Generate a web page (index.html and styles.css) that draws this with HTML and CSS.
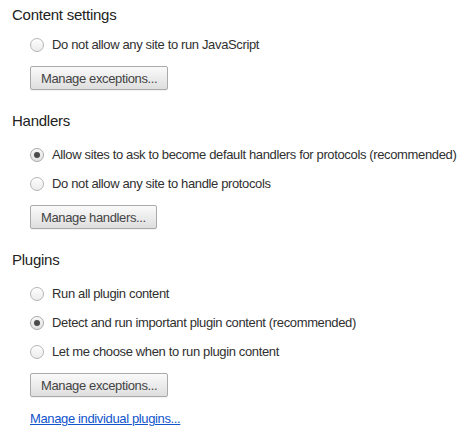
FILE: index.html
```html
<!DOCTYPE html>
<html>
<head>
<meta charset="utf-8">
<link rel="stylesheet" href="styles.css">
</head>
<body>
<div class="page">
  <section class="section section-first">
    <h3 class="heading">Content settings</h3>
    <div class="options">
      <label class="option"><span class="radio"></span><span class="label">Do not allow any site to run JavaScript</span></label>
    </div>
    <button class="btn">Manage exceptions...</button>
  </section>
  <section class="section">
    <h3 class="heading">Handlers</h3>
    <div class="options">
      <label class="option"><span class="radio checked"></span><span class="label">Allow sites to ask to become default handlers for protocols (recommended)</span></label>
      <label class="option"><span class="radio"></span><span class="label">Do not allow any site to handle protocols</span></label>
    </div>
    <button class="btn">Manage handlers...</button>
  </section>
  <section class="section">
    <h3 class="heading">Plugins</h3>
    <div class="options">
      <label class="option"><span class="radio"></span><span class="label">Run all plugin content</span></label>
      <label class="option"><span class="radio checked"></span><span class="label">Detect and run important plugin content (recommended)</span></label>
      <label class="option"><span class="radio"></span><span class="label">Let me choose when to run plugin content</span></label>
    </div>
    <button class="btn">Manage exceptions...</button>
    <a class="link" href="#">Manage individual plugins...</a>
  </section>
</div>
</body>
</html>
```
FILE: styles.css
```css
html, body {
  margin: 0;
  padding: 0;
  background: #fff;
}
body {
  font-family: "Liberation Sans", Arial, Helvetica, sans-serif;
  font-size: 13px;
  color: #303030;
  letter-spacing: -0.36px;
}
.page {
  display: flex;
  flex-direction: column;
  padding: 6px 0 0 12px;
}
.section {
  display: flex;
  flex-direction: column;
  align-items: flex-start;
  margin-top: 22px;
}
.section-first {
  margin-top: 0;
}
.heading {
  margin: 0;
  font-size: 15px;
  line-height: 18px;
  font-weight: normal;
  color: #222;
  letter-spacing: -0.25px;
}
.options {
  display: flex;
  flex-direction: column;
  margin: 10px 0 7px 18px;
}
.section-first .options {
  margin-top: 6px;
}
.option {
  display: flex;
  align-items: center;
  height: 29px;
  gap: 8px;
}
.radio {
  box-sizing: border-box;
  width: 14px;
  height: 14px;
  border-radius: 50%;
  border: 1px solid #b4b4b4;
  background: linear-gradient(#fdfdfd, #ececec);
  box-shadow: inset 0 1px 1px rgba(255,255,255,0.9);
  display: flex;
  align-items: center;
  justify-content: center;
  flex: none;
}
.radio.checked {
  background: linear-gradient(#f4f4f4, #e2e2e2);
  border-color: #a8a8a8;
}
.radio.checked::after {
  content: "";
  width: 6px;
  height: 6px;
  border-radius: 50%;
  background: #4a4a4a;
}
.label {
  line-height: 16px;
  white-space: nowrap;
}
.btn {
  margin-left: 18px;
  box-sizing: border-box;
  height: 24px;
  padding: 0 10px;
  border: 1px solid #aaa;
  border-radius: 2px;
  background: linear-gradient(#fafafa, #dedede);
  font-family: inherit;
  font-size: 13px;
  letter-spacing: -0.36px;
  color: #444;
  box-shadow: 0 1px 0 rgba(0,0,0,0.05);
}
.link {
  margin: 14px 0 0 18px;
  line-height: 16px;
  color: #15c;
  text-decoration: underline;
}
```
